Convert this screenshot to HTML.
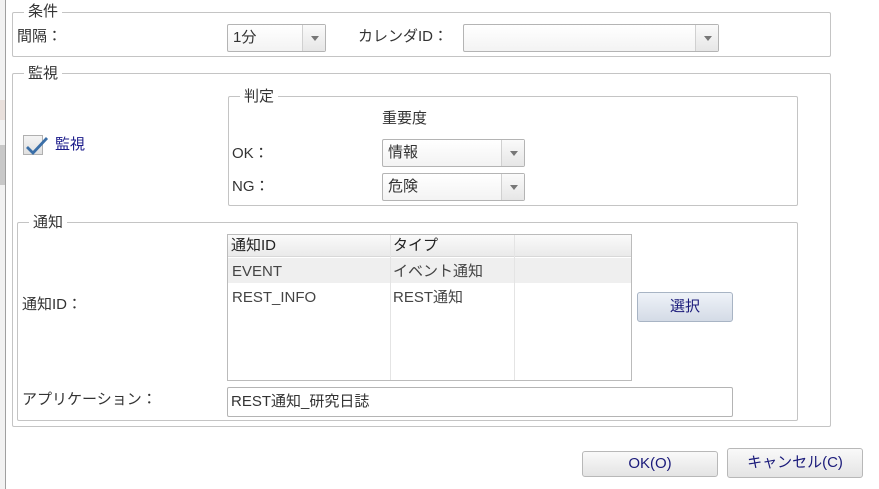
<!DOCTYPE html>
<html><head><meta charset="utf-8"><style>
*{box-sizing:border-box;margin:0;padding:0}
body{width:879px;height:489px;background:#fff;position:relative;overflow:hidden;font-family:"Liberation Sans","Noto Sans CJK JP",sans-serif;font-size:15px;color:#333}
.a{position:absolute}
.fs{position:absolute;border:1px solid #c4c4c4;border-radius:2px}
.lg{position:absolute;background:#fff;padding:0 4px;font-size:15px;color:#333;line-height:16px}
.t{position:absolute;line-height:16px;white-space:nowrap}
.cb{position:absolute;border:1px solid #b4b4b4;border-radius:2px;background:linear-gradient(#fff,#f3f3f3)}
.cb .ar{position:absolute;right:0;top:0;bottom:0;width:23px;border-left:1px solid #d0d0d0;background:linear-gradient(#fafafa,#e6e6e6)}
.cb .ar:after{content:"";position:absolute;left:8px;top:11px;border-left:4px solid transparent;border-right:4px solid transparent;border-top:5px solid #777}
.cb span{position:absolute;left:5px;top:5px;line-height:16px}
.btn{position:absolute;border:1px solid #b8b8b8;border-radius:3px;background:linear-gradient(#f9f9f9,#e4e4e4);color:#1a1a7a;text-align:center;font-size:15px}
</style></head><body>
<div class="a" style="left:0;top:0;width:5px;height:489px;background:#f2f2f2"></div>
<div class="a" style="left:5px;top:0;width:1px;height:489px;background:#a0a0a0"></div>
<div class="a" style="left:0;top:100px;width:5px;height:20px;background:#e9e0dc"></div>
<div class="a" style="left:0;top:145px;width:5px;height:40px;background:#c8c8c8"></div>

<div class="fs" style="left:12px;top:12px;width:819px;height:45px"></div>
<div class="lg" style="left:24px;top:4px">条件</div>
<div class="t" style="left:17px;top:29px">間隔：</div>
<div class="cb" style="left:227px;top:24px;width:99px;height:28px"><span>1分</span><div class="ar"></div></div>
<div class="t" style="left:358px;top:29px">カレンダID：</div>
<div class="cb" style="left:463px;top:24px;width:256px;height:28px"><div class="ar"></div></div>

<div class="fs" style="left:12px;top:73px;width:819px;height:354px"></div>
<div class="lg" style="left:24px;top:66px">監視</div>

<div class="a" style="left:23px;top:135px;width:20px;height:20px;border:1px solid #b0b0b0;background:linear-gradient(#f4f4f4,#e0e0e0)"></div>
<svg class="a" style="left:22px;top:132px" width="28" height="26"><path d="M5 15 L11 21 L25 6" stroke="#3b6fa8" stroke-width="2.8" fill="none"/></svg>
<div class="t" style="left:55px;top:137px;color:#1a1a8a">監視</div>

<div class="fs" style="left:228px;top:96px;width:570px;height:110px"></div>
<div class="lg" style="left:240px;top:89px">判定</div>
<div class="t" style="left:382px;top:111px">重要度</div>
<div class="t" style="left:232px;top:146px">OK：</div>
<div class="cb" style="left:382px;top:139px;width:143px;height:28px"><span>情報</span><div class="ar"></div></div>
<div class="t" style="left:232px;top:179px">NG：</div>
<div class="cb" style="left:382px;top:173px;width:143px;height:28px"><span>危険</span><div class="ar"></div></div>

<div class="fs" style="left:17px;top:222px;width:781px;height:199px"></div>
<div class="lg" style="left:29px;top:215px">通知</div>
<div class="t" style="left:22px;top:297px">通知ID：</div>
<div class="a" style="left:227px;top:234px;width:405px;height:147px;border:1px solid #bbb;background:#fff">
 <div class="a" style="left:0;top:0;width:403px;height:22px;background:linear-gradient(#fafafa,#eaeaea);border-bottom:1px solid #d8d8d8"></div>
 <div class="a" style="left:0;top:23px;width:403px;height:25px;background:#efefef"></div>
 <div class="a" style="left:162px;top:0;width:1px;height:145px;background:#e4e4e4"></div>
 <div class="a" style="left:286px;top:0;width:1px;height:145px;background:#e4e4e4"></div>
 <div class="t" style="left:3px;top:3px;color:#222">通知ID</div>
 <div class="t" style="left:165px;top:3px;color:#222">タイプ</div>
 <div class="t" style="left:4px;top:29px;color:#444">EVENT</div>
 <div class="t" style="left:165px;top:29px;color:#444">イベント通知</div>
 <div class="t" style="left:4px;top:55px;color:#444">REST_INFO</div>
 <div class="t" style="left:165px;top:55px;color:#444">REST通知</div>
</div>
<div class="btn" style="left:637px;top:292px;width:96px;height:30px;line-height:28px;background:linear-gradient(#eef2f8,#d4dbe6);border-color:#a8b4c4">選択</div>
<div class="t" style="left:22px;top:392px">アプリケーション：</div>
<div class="a" style="left:227px;top:387px;width:506px;height:30px;border:1px solid #b4b4b4;border-radius:2px"></div>
<div class="t" style="left:231px;top:394px;color:#333">REST通知_研究日誌</div>

<div class="btn" style="left:582px;top:451px;width:136px;height:26px;line-height:24px">OK(O)</div>
<div class="btn" style="left:727px;top:448px;width:136px;height:30px;line-height:28px">キャンセル(C)</div>
</body></html>
